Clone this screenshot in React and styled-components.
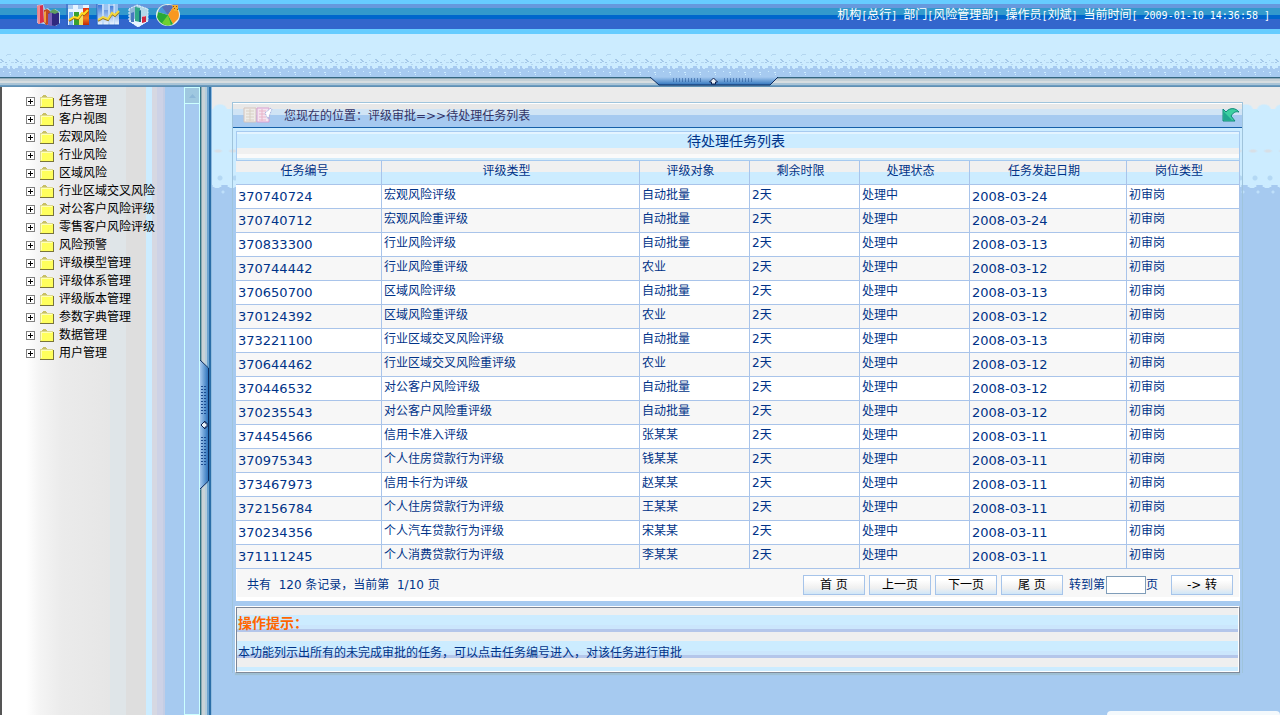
import React, { useState } from "react"
import styled, { createGlobalStyle, css } from "styled-components"

const GlobalStyle = createGlobalStyle`
  * {
    box-sizing: border-box;
  }
  body {
    margin: 0;
    background: #a6caf0;
    color: #003388;
    font-family: "DejaVu Sans", "Noto Sans CJK SC", sans-serif;
    font-size: 12px;
    line-height: 18px;
  }
  button,
  input {
    font-family: inherit;
    font-size: inherit;
  }
`

const Page = styled.div`
  position: relative;
  display: flex;
  flex-direction: column;
  min-height: 100vh;
  overflow: hidden;
`

const TopBar = styled.header`
  display: flex;
  align-items: center;
  justify-content: space-between;
  height: 34px;
  padding: 0 10px 4px 36px;
  background: linear-gradient(
    #66ccff 4px,
    #6699dd 4px 8px,
    #3399cc 8px 15px,
    #0066cc 15px 19px,
    #3366cc 19px 29px,
    #66ccff 29px
  );
`

const Tools = styled.nav`
  display: flex;
  gap: 6px;
`

const ToolButton = styled.button`
  width: 24px;
  height: 24px;
  padding: 0;
  border: 0;
  background: none;
  cursor: pointer;
  svg {
    display: block;
  }
`

const Session = styled.div`
  color: white;
  white-space: pre;
`

const Mono = styled.span`
  font-family: "DejaVu Sans Mono", monospace;
  font-size: 10px;
`

const Band = styled.div`
  height: 43px;
  background: linear-gradient(#ccecff 33px, #a6caf0 33px);
  svg {
    display: block;
  }
`

const TopSplitter = styled.div`
  display: flex;
  justify-content: center;
  height: 10px;
  padding-left: 148px;
  background: linear-gradient(
    #336680 1px,
    #8fa9b8 1px 2px,
    #c4d0d6 2px 4px,
    #d6dde0 4px 6px,
    #a9c4d6 6px 8px,
    #6c9cc0 8px 9px,
    #5f90b4 9px
  );
`

const Body = styled.div`
  display: flex;
  flex: 1;
`

const Sidebar = styled.aside`
  display: flex;
  flex: none;
  width: 200px;
  border-left: 2px solid #555;
  background: linear-gradient(
    90deg,
    #ffffff 24px,
    #f4f4f4 38px,
    #ebebeb 60px,
    #e6e6e6 108px,
    #dfe5e8 108px 124px,
    #dedede 124px 144px,
    #ccecff 144px 150px,
    #d6d8e2 150px 155px,
    #cdd2e6 155px 161px,
    #c4cde4 161px 163px,
    #a6caf0 163px
  );
`

const Tree = styled.ul`
  flex: 1;
  margin: 0;
  padding: 5px 0 0 24px;
  list-style: none;
`

const TreeItem = styled.li`
  display: flex;
  align-items: center;
  height: 18px;
`

const Toggle = styled.button`
  display: flex;
  flex: none;
  width: 9px;
  height: 9px;
  margin-right: 5px;
  padding: 0;
  border: 0;
  background: none;
`

const TreeLink = styled.a`
  display: flex;
  align-items: center;
  gap: 5px;
  color: black;
  text-decoration: none;
  white-space: nowrap;
`

const ScrollTrack = styled.div`
  flex: none;
  width: 16px;
  border: 1px solid #ccffff;
  border-top: 0;
`

const ScrollUp = styled.div`
  display: flex;
  align-items: center;
  justify-content: center;
  height: 17px;
  border-top: 1px solid #ccffff;
  border-bottom: 1px solid #ccffff;
  background: #9fc8e0;
`

const SideSplitter = styled.div`
  display: flex;
  flex: none;
  align-items: center;
  width: 12px;
  padding-top: 48px;
  background: linear-gradient(
    90deg,
    #2f7484 1px,
    #8fa9b4 1px 2px,
    #c9d3d6 2px 5px,
    #b4cddd 5px 7px,
    #6ea5d0 7px 9px,
    #2a6ea8 9px 11px,
    #8fbbe0 11px
  );
`

const Main = styled.main`
  flex: 1;
  min-width: 0;
  padding: 15px 37px 42px 20px;
  background:
    radial-gradient(ellipse at 8px 8px, #ccecff 6px, transparent 8px) 0 15px / 18px 10px repeat-x,
    radial-gradient(ellipse at 6px 4px, #d8dfe6 2px, transparent 5px) 0 60px / 15px 8px repeat-x,
    radial-gradient(circle at 8px 3px, #b4d8f4 2px, transparent 3px) 0 88px / 15px 6px repeat-x,
    radial-gradient(ellipse at 5px 2px, #ccecff 4px, transparent 5px) 0 97px / 15px 6px repeat-x,
    radial-gradient(circle at 11px 2px, #bfe0fa 1px, transparent 2px) 0 103px / 15px 6px repeat-x,
    linear-gradient(#ebebeb 22px, #ccecff 22px 98px, #a6caf0 98px);
`

const Panel = styled.section`
  border: 1px solid #9fc4dc;
  border-bottom: 0;
`

const PanelHeader = styled.div`
  display: flex;
  align-items: center;
  height: 25px;
  padding: 0 1px 0 10px;
  border-bottom: 1px solid #1560a8;
  color: #333366;
  background: linear-gradient(
    #ffffff 1px,
    #e8e8e8 1px 6px,
    #d0e4f5 6px 12px,
    #a6caf0 12px
  );
`

const Crumbs = styled.div`
  flex: 1;
  padding: 1px 0 0 11px;
`

const BackButton = styled(ToolButton)`
  width: 20px;
  height: 18px;
`

const PanelBody = styled.div`
  padding: 3px 2px 0 3px;
`

const Table = styled.table`
  width: 100%;
  table-layout: fixed;
  border-spacing: 0;
`

const Caption = styled.caption`
  height: 29px;
  padding-right: 4px;
  border: 1px solid #a6caf0;
  border-bottom: 0;
  font-size: 14px;
  line-height: 18px;
  background: linear-gradient(
    #e4f4ff 2px,
    #ccecff 2px 16px,
    #f0f0f0 16px 22px,
    #fafafa 22px 26px,
    #d4ecfa 26px
  );
`

const cell = css`
  height: 24px;
  padding: 0 2px;
  border-right: 1px solid #a9c4ea;
  border-bottom: 1px solid #a9c4ea;
  white-space: nowrap;
`

const HeadCell = styled.th`
  ${cell}
  height: 25px;
  padding: 0 10px 3px 2px;
  border-top: 1px solid #a6caf0;
  font-weight: normal;
  text-align: center;
  background: linear-gradient(#f0f0f0 11px, #ccecff 11px);
`

const Row = styled.tr`
  background: white;
  &:nth-child(even) {
    background: #f7f7f7;
  }
`

const Cell = styled.td`
  ${cell}
  padding-bottom: 3px;
  line-height: 16px;
`

const NumberCell = styled(Cell)`
  padding-bottom: 0;
  font-size: 13px;
`

const Col = styled.col`
  width: ${props => (props.$width ? props.$width + "px" : "auto")};
`

const Pager = styled.form`
  display: flex;
  align-items: center;
  height: 32px;
  padding: 0 6px 0 10px;
  border: 1px solid white;
  border-top: 0;
  background: linear-gradient(#f7f7f7 28px, #ffffff 28px);
`

const Total = styled.span`
  flex: 1;
  white-space: pre;
`

const PagerButtons = styled.div`
  display: flex;
  gap: 4px;
`

const PagerButton = styled.button`
  width: 62px;
  height: 20px;
  padding: 0;
  border: 1px solid #a6c4ea;
  color: black;
  line-height: 16px;
  white-space: pre;
  background: linear-gradient(#ffffff 4px, #f0f0f0 12px, #cfe6f8);
`

const JumpLabel = styled.label`
  display: flex;
  align-items: center;
  margin: 0 13px 0 6px;
`

const JumpInput = styled.input`
  width: 40px;
  height: 18px;
  margin: 0 0 0 1px;
  padding: 0 2px;
  border: 1px solid #7f9db9;
  background: white;
`

const Tips = styled.section`
  height: 67px;
  margin-top: 5px;
  margin-left: -1px;
  border: 1px solid white;
  border-right-color: #808a9a;
  border-bottom-color: #808a9a;
  box-shadow: 0 2px 1px #9fc0d4;
`

const TipsInner = styled.div`
  height: 100%;
  padding: 0 1px;
  border: 1px solid white;
  border-top-color: #7c8696;
  border-left-color: #7c8696;
  line-height: 30px;
  background: repeating-linear-gradient(
    #efefef 0 7px,
    #ccecff 7px 17px,
    #cbe6fc 17px 21px,
    #b4c6ea 21px 24px,
    #efefef 24px 26px
  );
`

const TipsTitle = styled.h2`
  margin: 0;
  color: #ff6600;
  font-size: 14px;
  line-height: 30px;
`

const TipsText = styled.p`
  margin: 0;
`

const Toast = styled.div`
  position: absolute;
  right: 0;
  bottom: 0;
  width: 173px;
  height: 4px;
  border-radius: 4px 4px 0 0;
  background: #f4f9fc;
`

const menu = [
  "任务管理",
  "客户视图",
  "宏观风险",
  "行业风险",
  "区域风险",
  "行业区域交叉风险",
  "对公客户风险评级",
  "零售客户风险评级",
  "风险预警",
  "评级模型管理",
  "评级体系管理",
  "评级版本管理",
  "参数字典管理",
  "数据管理",
  "用户管理",
]

const columns = [
  { title: "任务编号", width: 146 },
  { title: "评级类型" },
  { title: "评级对象", width: 110 },
  { title: "剩余时限", width: 110 },
  { title: "处理状态", width: 110 },
  { title: "任务发起日期", width: 157 },
  { title: "岗位类型", width: 113 },
]

const tasks = [
  ["370740724", "宏观风险评级", "自动批量", "2008-03-24"],
  ["370740712", "宏观风险重评级", "自动批量", "2008-03-24"],
  ["370833300", "行业风险评级", "自动批量", "2008-03-13"],
  ["370744442", "行业风险重评级", "农业", "2008-03-12"],
  ["370650700", "区域风险评级", "自动批量", "2008-03-13"],
  ["370124392", "区域风险重评级", "农业", "2008-03-12"],
  ["373221100", "行业区域交叉风险评级", "自动批量", "2008-03-13"],
  ["370644462", "行业区域交叉风险重评级", "农业", "2008-03-12"],
  ["370446532", "对公客户风险评级", "自动批量", "2008-03-12"],
  ["370235543", "对公客户风险重评级", "自动批量", "2008-03-12"],
  ["374454566", "信用卡准入评级", "张某某", "2008-03-11"],
  ["370975343", "个人住房贷款行为评级", "钱某某", "2008-03-11"],
  ["373467973", "信用卡行为评级", "赵某某", "2008-03-11"],
  ["372156784", "个人住房贷款行为评级", "王某某", "2008-03-11"],
  ["370234356", "个人汽车贷款行为评级", "宋某某", "2008-03-11"],
  ["371111245", "个人消费贷款行为评级", "李某某", "2008-03-11"],
]

const BooksIcon = () => (
  <svg width="24" height="24" viewBox="0 0 24 24">
    <path d="M1 2l6-1 2 5 3-1 3 3 4-2 5 3v11l-4 3-8-1-4-1-7-1z" fill="#b9d4ee" />
    <path d="M1 3l6-1 1 17-6 2z" fill="#d8304a" />
    <path d="M1 3l3-1v19l-2 0z" fill="#f08a90" />
    <path d="M8 7l3-1 3 2v13l-4 1-2-3z" fill="#c04a20" />
    <path d="M8 9l2-1v12l-2-1z" fill="#f0a040" />
    <path d="M12 11l6-4 5 3v11l-4 2-7-1z" fill="#302880" />
    <path d="M12 11l4-2v14l-4-1z" fill="#7a60b8" />
    <path d="M13 9l5-3 5 3-4 2z" fill="#60a060" />
  </svg>
)

const BarLineIcon = () => (
  <svg width="24" height="24" viewBox="0 0 24 24">
    <defs>
      <linearGradient id="fire" x2="0" y2="1">
        <stop offset="0" stopColor="#e03010" />
        <stop offset="0.6" stopColor="#f08020" />
        <stop offset="1" stopColor="#c02808" />
      </linearGradient>
    </defs>
    <rect x="2" y="2" width="21" height="20" fill="#e8f4ff" />
    <path d="M8 9h5v13H8z" fill="#38a030" />
    <path d="M13 13h4v9h-4z" fill="#f0e060" />
    <path d="M17 5h6v17h-6z" fill="url(#fire)" />
    <path d="M3 9h4v13H3z" fill="#78b0ec" />
    <path d="M3 18l5-3 4 1 4-5 2 1 4-4" fill="none" stroke="#a06000" strokeWidth="2" />
    <path d="M3 17l5-3 4 1 4-5 2 1 4-4" fill="none" stroke="#ffdc20" strokeWidth="2" />
    <path d="M1 1v22h22" fill="none" stroke="#3060c0" />
    <path d="M2 2h5v4H2zM12 2h5v4h-5z" fill="#a8ccf0" />
  </svg>
)

const LineIcon = () => (
  <svg width="24" height="24" viewBox="0 0 24 24">
    <defs>
      <linearGradient id="sky" x2="0" y2="1">
        <stop offset="0" stopColor="#3a78d8" />
        <stop offset="1" stopColor="#f0f8ff" />
      </linearGradient>
    </defs>
    <rect x="1" y="1" width="21" height="21" fill="#9cc4f0" />
    <path d="M2 2h4v20H2zM8 7h4v15H8zM14 3h4v19h-4zM19 9h4v13h-4z" fill="url(#sky)" />
    <path d="M7 1v21M13 1v21M18 1v21" stroke="#e4f0ff" />
    <path d="M2 18l5-3 5 2 4-6 3 2 4-4" fill="none" stroke="#907020" strokeWidth="2" />
    <path d="M2 17l5-3 5 2 4-6 3 2 4-4" fill="none" stroke="#f4d840" strokeWidth="2" />
    <path d="M1 1v21h22" fill="none" stroke="#2860c0" />
  </svg>
)

const CubeIcon = () => (
  <svg width="24" height="24" viewBox="0 0 24 24">
    <path d="M3 6l8-4 11 4v12l-10 6-9-6z" fill="#c8e0f0" />
    <path d="M3 6l8-4v13l-8 3z" fill="#90b8d8" />
    <path d="M11 2l11 4v12l-11-3z" fill="#b4d8e8" />
    <path d="M3 18l8-3 11 3-10 6z" fill="#e8f4ff" />
    <path d="M5 10l3-1v10H5z" fill="#4878c0" />
    <path d="M9 4l5 1v14l-5-1z" fill="#30a888" />
    <path d="M13 8l2-1v12h-2z" fill="#186888" />
    <path d="M16 14l4-1v6l-4 1z" fill="#d02840" />
    <path d="M16 14l2-1 2 0-2 1z" fill="#ff8898" />
    <path d="M3 6v12l9 6 10-6V6L11 2z" fill="none" stroke="#e8f4ff" strokeDasharray="2 1" />
  </svg>
)

const PieIcon = () => (
  <svg width="24" height="24" viewBox="0 0 24 24">
    <ellipse cx="12" cy="12" rx="12" ry="11" fill="#e8f0e8" />
    <path d="M12 12L2 9C3 5 6 2 11 2z" fill="#4898d8" />
    <path d="M12 12L6 4c3-2 8-3 12-1z" fill="#5870b8" />
    <path d="M12 12l6-9c5 3 6 9 4 13l-5 5z" fill="#f89820" />
    <path d="M12 12l5 9C10 25 3 20 1 14l1-5z" fill="#28a838" />
    <path d="M12 12l3 10c-3 1-7 0-9-2z" fill="#70d030" />
    <path d="M16 2h6v6h-4z" fill="#f0b030" />
    <path d="M17 3h1v1h-1zM20 3h1v1h-1zM18 5h1v1h-1zM21 6h1v1h-1z" fill="#a04010" />
  </svg>
)

const FolderIcon = () => (
  <svg width="14" height="13" viewBox="0 0 14 13" shapeRendering="crispEdges">
    <path d="M2 1h5v2H2zM3 0h3v1H3z" fill="#c8c064" />
    <path d="M0 2h13v10H0z" fill="#dcd890" />
    <path d="M1 3h12v9H1z" fill="#ffff5c" />
    <path d="M1 3h11v1H1zM1 3h1v8H1z" fill="#ffffb8" />
    <path d="M0 12h14v1H0zM13 3h1v9h-1z" fill="#78733c" />
  </svg>
)

const PlusIcon = () => (
  <svg width="9" height="9" viewBox="0 0 9 9" shapeRendering="crispEdges">
    <path d="M.5.5h8v8h-8z" fill="white" stroke="#808080" />
    <path d="M2 4.500h5M4.500 2v5" stroke="black" />
  </svg>
)

const BookIcon = () => (
  <svg width="30" height="18" viewBox="0 0 30 18">
    <path d="M1 2h12v14H1z" fill="#eeece8" stroke="#d4c4bc" />
    <path d="M14 2h12v14H14z" fill="#f4e4f0" stroke="#d8a0d0" />
    <path d="M3 5h8M3 8h8M3 11h8M3 14h8M7 3v12" stroke="#d8d0c4" />
    <path d="M16 5h7M16 8h7M16 11h7M16 14h7M19 3v12" stroke="#e8b4c8" />
    <path d="M22 7l6-5 1 1-4 10z" fill="#ffffff" stroke="#a8b4e0" strokeDasharray="2 1" />
  </svg>
)

const BackIcon = () => (
  <svg width="20" height="18" viewBox="0 0 20 18">
    <path
      d="M2 3l3 3c4-5 10-4 13 0-4-1-6 1-8 4l4 5H2z"
      fill="#3cd0a0"
      stroke="#108878"
      strokeLinejoin="round"
    />
    <path d="M3 6l8 8H3z" fill="#20a890" />
  </svg>
)

const Waves = () => (
  <svg width="100%" height="43" shapeRendering="crispEdges">
    <defs>
      <pattern id="waves" width="15" height="43" patternUnits="userSpaceOnUse">
        <path d="M7 20h4v1H7zM6 21h1v1H6z" fill="#b4d6f0" />
        <path d="M0 25h2v1H0zM1 26h2v1H1zM2 27h2v1H2zM0 28h2v1H0zM5 28h2v1H5z" fill="#a4c8e8" />
        <path d="M9 26h1v1H9zM11 28h3v1h-3zM6 30h2v1H6z" fill="#b4d6f0" />
        <path d="M3 32h4v1H3zM10 32h2v1h-2z" fill="#a6caf0" />
        <path d="M0 33h3v1H0zM7 33h3v1H7zM12 33h3v1h-3zM8 34h2v1H8zM13 34h2v1h-2z" fill="#ccecff" />
        <path d="M9 38h2v1H9zM10 40h1v1h-1zM3 37h1v1H3z" fill="#ccecff" />
      </pattern>
    </defs>
    <rect width="100%" height="43" fill="url(#waves)" />
  </svg>
)

const dots = [0, 1, 2, 3, 4, 5, 6, 7, 8, 9]

const TopHandle = () => (
  <svg width="128" height="9" viewBox="0 0 128 9">
    <defs>
      <linearGradient id="topHandle" x2="0" y2="1">
        <stop offset="0" stopColor="#a6caf0" />
        <stop offset="1" stopColor="#2f74bc" />
      </linearGradient>
    </defs>
    <path d="M0 0h128l-8 8H9z" fill="url(#topHandle)" />
    <path d="M0 0l9 8h111l8-8" fill="none" stroke="#0c2c60" />
    {dots.map(i => (
      <path
        key={i}
        d={`M${23 + i * 3} 2h1M${23 + i * 3} 4h1M${74 + i * 3} 2h1M${74 + i * 3} 4h1`}
        stroke="#1c4c90"
      />
    ))}
    <path d="M63.500 1l4 4h-2v2h-4v-2h-2z" fill="#e8f0f8" stroke="#0c2050" />
  </svg>
)

const SideHandle = () => (
  <svg width="10" height="130" viewBox="0 0 10 130">
    <defs>
      <linearGradient id="sideHandle">
        <stop offset="0" stopColor="#a6caf0" />
        <stop offset="1" stopColor="#2f74bc" />
      </linearGradient>
    </defs>
    <path d="M0 0l8 8v113l-8 9z" fill="url(#sideHandle)" />
    <path d="M0 0l8.500 8v113L0 129" fill="none" stroke="#0c2c60" />
    {dots.map(i => (
      <path
        key={i}
        d={`M2 ${26 + i * 3}v1M5 ${26 + i * 3}v1M2 ${77 + i * 3}v1M5 ${77 + i * 3}v1`}
        stroke="#1c4c90"
        strokeWidth="2"
      />
    ))}
    <path d="M1 65l4-4v2h2v4H5v2z" fill="#e8f0f8" stroke="#0c2050" />
  </svg>
)

const UpArrow = () => (
  <svg width="7" height="4" viewBox="0 0 7 4">
    <path d="M0 4l3.500-4L7 4z" fill="#8cb8d8" />
  </svg>
)

const tools = [
  ["报表", BooksIcon],
  ["柱形图", BarLineIcon],
  ["折线图", LineIcon],
  ["立体图", CubeIcon],
  ["饼图", PieIcon],
]

const Field = ({ label, children }) => (
  <>
    {label}
    <Mono>[</Mono>
    {children}
    <Mono>{"] "}</Mono>
  </>
)

const App = () => {
  const [page, setPage] = useState("")

  return (
    <Page>
      <GlobalStyle />
      <TopBar>
        <Tools>
          {tools.map(([name, Icon]) => (
            <ToolButton key={name} type="button" aria-label={name}>
              <Icon />
            </ToolButton>
          ))}
        </Tools>
        <Session>
          <Field label="机构">总行</Field>
          <Field label="部门">风险管理部</Field>
          <Field label="操作员">刘斌</Field>
          当前时间
          <Mono>[ 2009-01-10 14:36:58 ]</Mono>
        </Session>
      </TopBar>
      <Band>
        <Waves />
      </Band>
      <TopSplitter>
        <TopHandle />
      </TopSplitter>

      <Body>
        <Sidebar>
          <Tree>
            {menu.map(item => (
              <TreeItem key={item}>
                <Toggle type="button" aria-label={"展开" + item}>
                  <PlusIcon />
                </Toggle>
                <TreeLink href="#">
                  <FolderIcon />
                  {item}
                </TreeLink>
              </TreeItem>
            ))}
          </Tree>
          <ScrollTrack>
            <ScrollUp>
              <UpArrow />
            </ScrollUp>
          </ScrollTrack>
        </Sidebar>
        <SideSplitter>
          <SideHandle />
        </SideSplitter>

        <Main>
          <Panel>
            <PanelHeader>
              <BookIcon />
              <Crumbs>您现在的位置：评级审批=&gt;&gt;待处理任务列表</Crumbs>
              <BackButton type="button" aria-label="返回">
                <BackIcon />
              </BackButton>
            </PanelHeader>
            <PanelBody>
              <Table>
                <Caption>待处理任务列表</Caption>
                <colgroup>
                  {columns.map(col => (
                    <Col key={col.title} $width={col.width} />
                  ))}
                </colgroup>
                <thead>
                  <tr>
                    {columns.map(col => (
                      <HeadCell key={col.title}>{col.title}</HeadCell>
                    ))}
                  </tr>
                </thead>
                <tbody>
                  {tasks.map(([id, type, target, date]) => (
                    <Row key={id}>
                      <NumberCell>{id}</NumberCell>
                      <Cell>{type}</Cell>
                      <Cell>{target}</Cell>
                      <Cell>2天</Cell>
                      <Cell>处理中</Cell>
                      <NumberCell>{date}</NumberCell>
                      <Cell>初审岗</Cell>
                    </Row>
                  ))}
                </tbody>
              </Table>
              <Pager onSubmit={e => e.preventDefault()}>
                <Total>{"共有  120 条记录，当前第  1/10 页"}</Total>
                <PagerButtons>
                  <PagerButton type="button">首 页</PagerButton>
                  <PagerButton type="button">上一页</PagerButton>
                  <PagerButton type="button">下一页</PagerButton>
                  <PagerButton type="button">尾 页</PagerButton>
                </PagerButtons>
                <JumpLabel>
                  转到第
                  <JumpInput
                    type="text"
                    value={page}
                    onChange={e => setPage(e.target.value)}
                  />
                  页
                </JumpLabel>
                <PagerButton type="submit">-&gt; 转</PagerButton>
              </Pager>
              <Tips>
                <TipsInner>
                  <TipsTitle>操作提示：</TipsTitle>
                  <TipsText>
                    本功能列示出所有的未完成审批的任务，可以点击任务编号进入，对该任务进行审批
                  </TipsText>
                </TipsInner>
              </Tips>
            </PanelBody>
          </Panel>
        </Main>
      </Body>
      <Toast />
    </Page>
  )
}

export default App
